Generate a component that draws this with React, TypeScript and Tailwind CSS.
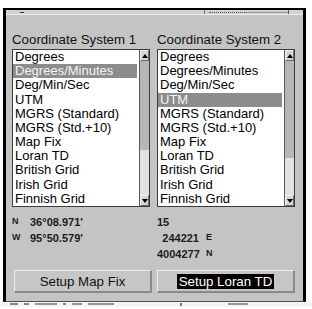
import React from "react";

const ITEMS = [
  "Degrees",
  "Degrees/Minutes",
  "Deg/Min/Sec",
  "UTM",
  "MGRS (Standard)",
  "MGRS (Std.+10)",
  "Map Fix",
  "Loran TD",
  "British Grid",
  "Irish Grid",
  "Finnish Grid",
];

function Arrow({ up }: { up: boolean }) {
  return (
    <div className="h-[11px] shrink-0 w-full flex items-center justify-center bg-[#d6d6d6] border-r border-b border-[#6a6a6a] border-t border-t-[#f0f0f0] border-l border-l-[#f0f0f0]">
      <svg width="6" height="4" viewBox="0 0 6 4">
        {up ? <polygon points="0,4 6,4 3,0" fill="#000" /> : <polygon points="0,0 6,0 3,4" fill="#000" />}
      </svg>
    </div>
  );
}

function ListBox({ selected, thumb }: { selected: string; thumb: number }) {
  return (
    <div className="flex h-[158px] border border-[#3c3c3c] bg-white">
      <div className="flex-1 flex flex-col pr-[2px] overflow-hidden">
        {ITEMS.map((it) => (
          <div
            key={it}
            className={
              it === selected
                ? "h-[14.18px] min-h-0 shrink-0 flex items-center pl-[2px] text-[13px] leading-[14px] bg-[#8c8c8c] text-[#f4f4f4] whitespace-nowrap"
                : "h-[14.18px] min-h-0 shrink-0 flex items-center pl-[2px] text-[13px] leading-[14px] text-black whitespace-nowrap"
            }
          >
            {it}
          </div>
        ))}
      </div>
      <div className="w-[10px] shrink-0 border-l border-[#5a5a5a] flex flex-col">
        <Arrow up={true} />
        <div className="bg-[#b6b6b6] shrink-0" style={{ height: thumb }} />
        <div className="flex-1 bg-[#e2e2e2]" />
        <Arrow up={false} />
      </div>
    </div>
  );
}

function Button({ label, active }: { label: string; active?: boolean }) {
  return (
    <div className="h-[23px] flex items-center justify-center bg-[#c6c6c6] border-t border-l border-[#ececec] border-b-2 border-r-2 border-b-[#8a8a8a] border-r-[#8a8a8a]">
      {active ? (
        <span className="bg-black text-white text-[13.3px] leading-[15px] px-[2px]">{label}</span>
      ) : (
        <span className="text-[#111] text-[13.3px] leading-[15px]">{label}</span>
      )}
    </div>
  );
}

export default function App() {
  return (
    <div
      className="w-[312px] h-[309px] bg-white overflow-hidden"
      style={{ fontFamily: '"Liberation Sans", Arial, sans-serif' }}
    >
      <div className="ml-[3px] mt-[8px] w-[303px] border-t-2 border-l-[3px] border-r-[3px] border-black border-b border-b-[#505050] bg-[#c4c4c4] flex flex-col pb-[8px]">
        {/* top strip */}
        <div className="h-[4px] bg-[#d2d2d2] flex items-center">
          <div className="ml-[14px] w-[4px] h-[1px] bg-[#333]" />
          <div className="ml-[180px] w-[1px] h-[4px] bg-[#777]" />
          <div className="ml-[4px] w-[36px] h-[1px] border-t border-dotted border-[#555]" />
          <div className="flex-1 h-[1px] bg-[#999]" />
          <div className="mr-[14px] w-[1px] h-[4px] bg-[#555]" />
        </div>
        <div className="h-[1px] bg-[#eeeeee]" />

        {/* columns */}
        <div className="flex pl-[6px] gap-[7px]">
          <div className="w-[138px] flex flex-col">
            <div className="mt-[17px] h-[16px] leading-[16px] text-[13.3px] text-[#111] whitespace-nowrap">
              Coordinate System 1
            </div>
            <div className="mt-[1px]">
              <ListBox selected="Degrees/Minutes" thumb={89} />
            </div>
          </div>
          <div className="w-[138px] flex flex-col">
            <div className="mt-[17px] h-[16px] leading-[16px] text-[13.3px] text-[#111] whitespace-nowrap">
              Coordinate System 2
            </div>
            <div className="mt-[1px]">
              <ListBox selected="UTM" thumb={97} />
            </div>
          </div>
        </div>

        {/* coordinates */}
        <div className="flex pl-[6px] gap-[7px] mt-[7px] text-[#1c1c1c]">
          <div className="w-[138px] flex flex-col">
            <div className="h-[16px] flex items-center">
              <span className="w-[18px] text-[9px] font-bold">N</span>
              <span className="text-[11px] font-bold">36°08.971'</span>
            </div>
            <div className="h-[16px] flex items-center">
              <span className="w-[18px] text-[9px] font-bold">W</span>
              <span className="text-[11px] font-bold">95°50.579'</span>
            </div>
          </div>
          <div className="w-[138px] flex flex-col">
            <div className="h-[16px] flex items-center">
              <span className="text-[11px] font-bold">15</span>
            </div>
            <div className="h-[16px] flex items-center">
              <span className="w-[42px] text-right text-[11px] font-bold">244221</span>
              <span className="ml-[7px] text-[9px] font-bold">E</span>
            </div>
            <div className="h-[16px] flex items-center">
              <span className="w-[42px] text-right text-[11px] font-bold">4004277</span>
              <span className="ml-[7px] text-[9px] font-bold">N</span>
            </div>
          </div>
        </div>

        {/* buttons */}
        <div className="flex pl-[8px] gap-[5px] mt-[8px]">
          <div className="w-[138px]">
            <Button label="Setup Map Fix" />
          </div>
          <div className="w-[138px]">
            <Button label="Setup Loran TD" active />
          </div>
        </div>
      </div>
      {/* cut-off marks below frame */}
      <div className="h-[5px] pl-[10px] pt-[1px] bg-[#f4f4f4] flex items-start gap-[6px]">
        <div className="w-[8px] h-[2px] bg-[#888]" />
        <div className="w-[5px] h-[2px] bg-[#888]" />
        <div className="w-[22px] h-[2px] bg-[#999]" />
        <div className="w-[3px] h-[2px] bg-[#888]" />
        <div className="w-[10px] h-[2px] bg-[#999]" />
        <div className="w-[26px] h-[2px] bg-[#999]" />
        <div className="ml-[60px] w-[2px] h-[3px] bg-[#777]" />
        <div className="ml-[40px] w-[20px] h-[2px] bg-[#999]" />
      </div>
    </div>
  );
}
